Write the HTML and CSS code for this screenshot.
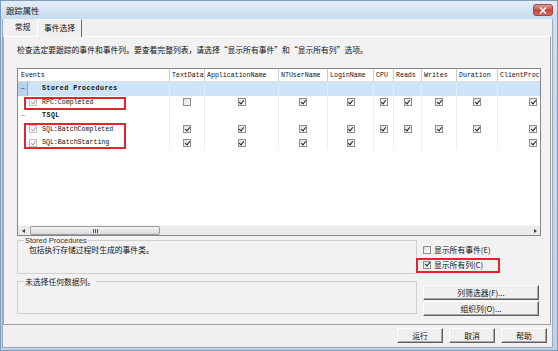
FILE: index.html
```html
<!DOCTYPE html>
<html lang="zh-CN">
<head>
<meta charset="utf-8">
<title>跟踪属性</title>
<link rel="stylesheet" href="styles.css">
</head>
<body>
<div class="win">
  <div class="titlebar">
    <span class="title">跟踪属性</span>
    <span class="close"><svg width="8" height="7" viewBox="0 0 8 7"><path d="M1 0.5 L7 6.5 M7 0.5 L1 6.5" stroke="#fff" stroke-width="1.6"/></svg></span>
  </div>
  <div class="client">
    <div class="tabs">
      <span class="tab">常规</span>
      <span class="tab active">事件选择</span>
    </div>
    <div class="panel">
      <p class="intro">检查选定要跟踪的事件和事件列。要查看完整列表，请选择“显示所有事件”和“显示所有列”选项。</p>
      <div class="grid">
        <div class="viewport">
          <div class="row head">
            <div class="c c0">Events</div>
            <div class="c">TextData</div>
            <div class="c">ApplicationName</div>
            <div class="c">NTUserName</div>
            <div class="c">LoginName</div>
            <div class="c">CPU</div>
            <div class="c">Reads</div>
            <div class="c">Writes</div>
            <div class="c">Duration</div>
            <div class="c">ClientProcessID</div>
          </div>
          <div class="row cat sel">
            <div class="c c0"><span class="exp box">−</span><b>Stored Procedures</b></div>
            <div class="c"></div><div class="c"></div><div class="c"></div><div class="c"></div>
            <div class="c"></div><div class="c"></div><div class="c"></div><div class="c"></div><div class="c"></div>
          </div>
          <div class="row ev">
            <div class="c c0"><span class="cb dim on"></span><span>RPC:Completed</span></div>
            <div class="c k"><span class="cb"></span></div>
            <div class="c k"><span class="cb on"></span></div>
            <div class="c k"><span class="cb on"></span></div>
            <div class="c k"><span class="cb on"></span></div>
            <div class="c k"><span class="cb on"></span></div>
            <div class="c k"><span class="cb on"></span></div>
            <div class="c k"><span class="cb on"></span></div>
            <div class="c k"><span class="cb on"></span></div>
            <div class="c k"><span class="cb on"></span></div>
          </div>
          <div class="row cat">
            <div class="c c0"><span class="exp">−</span><b>TSQL</b></div>
            <div class="c"></div><div class="c"></div><div class="c"></div><div class="c"></div>
            <div class="c"></div><div class="c"></div><div class="c"></div><div class="c"></div><div class="c"></div>
          </div>
          <div class="row ev">
            <div class="c c0"><span class="cb dim on"></span><span>SQL:BatchCompleted</span></div>
            <div class="c k"><span class="cb on"></span></div>
            <div class="c k"><span class="cb on"></span></div>
            <div class="c k"><span class="cb on"></span></div>
            <div class="c k"><span class="cb on"></span></div>
            <div class="c k"><span class="cb on"></span></div>
            <div class="c k"><span class="cb on"></span></div>
            <div class="c k"><span class="cb on"></span></div>
            <div class="c k"><span class="cb on"></span></div>
            <div class="c k"><span class="cb on"></span></div>
          </div>
          <div class="row ev">
            <div class="c c0"><span class="cb dim on"></span><span>SQL:BatchStarting</span></div>
            <div class="c k"><span class="cb on"></span></div>
            <div class="c k"><span class="cb on"></span></div>
            <div class="c k"><span class="cb on"></span></div>
            <div class="c k"><span class="cb on"></span></div>
            <div class="c k"></div>
            <div class="c k"></div>
            <div class="c k"></div>
            <div class="c k"></div>
            <div class="c k"><span class="cb on"></span></div>
          </div>
        </div>
        <div class="hscroll">
          <span class="arrow left"></span>
          <span class="thumb"><span class="grip"></span></span>
          <span class="arrow right"></span>
        </div>
        <span class="mark m1"></span>
        <span class="mark m2"></span>
      </div>
      <div class="lower">
        <div class="groups">
          <fieldset class="gb gb1">
            <legend class="lat">Stored Procedures</legend>
            <p class="desc">包括执行存储过程时生成的事件类。</p>
          </fieldset>
          <fieldset class="gb gb2">
            <legend>未选择任何数据列。</legend>
          </fieldset>
        </div>
        <div class="side">
          <div class="opt"><span class="cb"></span><span>显示所有事件(E)</span></div>
          <div class="opt hl"><span class="cb on"></span><span>显示所有列(C)</span></div>
          <button class="btn wide first">列筛选器(F)...</button>
          <button class="btn wide">组织列(O)...</button>
        </div>
      </div>
    </div>
    <div class="footer">
      <button class="btn">运行</button>
      <button class="btn">取消</button>
      <button class="btn">帮助</button>
    </div>
  </div>
</div>
</body>
</html>
```

FILE: styles.css
```css
* { box-sizing: border-box; }

html, body {
  margin: 0;
  width: 558px;
  height: 351px;
  overflow: hidden;
}

body {
  font-family: "Noto Sans CJK SC", "Liberation Sans", sans-serif;
  font-size: 7.8px;
  color: #111;
  background: #c6d8ec;
}

.win {
  width: 558px;
  height: 351px;
  display: flex;
  flex-direction: column;
  background: linear-gradient(#cfdff0, #bcd2ea);
  border: 1px solid #7f9db9;
}

.titlebar {
  height: 18px;
  display: flex;
  align-items: center;
  padding-left: 5px;
  background: linear-gradient(#e4eef8, #c8daee);
}

.title {
  font-size: 8.4px;
  line-height: 10px;
  color: #1a1a1a;
}

.close {
  margin-left: auto;
  margin-right: 4px;
  width: 20px;
  height: 12px;
  border-radius: 3px;
  border: 1px solid #9b4a4a;
  background: linear-gradient(#e29a92, #c7463d 55%, #d26a5e);
  display: flex;
  align-items: center;
  justify-content: center;
}

.client {
  flex: 1;
  margin: 0 4px 2px 1px;
  background: #f0f0f0;
  display: flex;
  flex-direction: column;
  border: 1px solid #9aaabb;
  border-top: none;
}

.tabs {
  height: 17px;
  display: flex;
  align-items: flex-end;
  padding-left: 5px;
}

.tab {
  height: 17px;
  line-height: 16px;
  padding: 0 5px;
  width: 29px;
  text-align: center;
}

.tab.active {
  width: 45px;
  border-left: 1px solid #fff;
  border-top: 1px solid #fff;
  border-right: 1px solid #6a6a6a;
  background: #f0f0f0;
  position: relative;
  height: 18px;
  margin-bottom: -1px;
}

.panel {
  margin: 0 1px 0 0;
  width: 548px;
  height: 289px;
  border: 1px solid #a0a0a0;
  border-top-color: #fff;
  border-left-color: #a8a8a8;
  padding: 7px 9px 0 13px;
  background: #f2f2f2;
}

.intro {
  margin: 0;
  line-height: 11px;
  white-space: nowrap;
}

/* ---- grid ---- */
.grid {
  position: relative;
  margin-top: 13px;
  height: 168px;
  border: 1px solid #828790;
  background: #fff;
  display: flex;
  flex-direction: column;
  overflow: hidden;
}

.viewport {
  flex: 1;
  overflow: hidden;
}

.row {
  display: grid;
  grid-template-columns: 152px 35px 74px 49px 46px 20px 28px 35px 41px 70px;
  width: 550px;
  height: 13.5px;
  font-family: "Liberation Mono", "DejaVu Sans Mono", monospace;
  font-size: 6.6px;
}

.c {
  border-right: 1px solid #ededed;
  display: flex;
  align-items: center;
  white-space: nowrap;
  overflow: hidden;
}

.head {
  height: 13px;
  background: #fff;
}

.head .c {
  border-right: 1px solid #cfcfcf;
  border-bottom: 1px solid #dcdcdc;
  padding-left: 2px;
}

.head .c0 { padding-left: 3px; }

.sel { background: #cde3f7; }
.sel .c { border-right-color: #e2eef9; }

.cat b {
  font-weight: bold;
  letter-spacing: 0.5px;
}

.c0 { padding-left: 0; }

.exp {
  width: 10px;
  height: 100%;
  display: flex;
  align-items: center;
  justify-content: center;
  font-size: 7px;
  color: #666;
  margin-right: 14px;
  font-family: "Liberation Sans", sans-serif;
}

.exp.box {
  background: #b7d2ee;
  border-right: 1px solid #8ea6bf;
  color: #222;
}

.ev .c0 { padding-left: 11px; }
.ev .c0 .cb { margin-right: 5px; }

.k { justify-content: center; }
.k:last-child { justify-content: flex-start; padding-left: 31px; }

/* checkbox */
.cb {
  position: relative;
  display: inline-block;
  flex: none;
  width: 8px;
  height: 8px;
  border: 1px solid #8e8f8f;
  background: linear-gradient(135deg, #dedede, #fff);
}

.cb.on::after {
  content: "";
  position: absolute;
  left: 1.7px;
  top: -0.2px;
  width: 2px;
  height: 4.2px;
  border: solid #1e1e1e;
  border-width: 0 1.4px 1.4px 0;
  transform: rotate(40deg);
}

.cb.dim {
  border-color: #c2c2c2;
  background: #f6f6f6;
}

.cb.dim.on::after { border-color: #a9a9a9; }

/* horizontal scrollbar */
.hscroll {
  height: 10px;
  flex: none;
  display: flex;
  align-items: center;
  background: #ebebeb;
  border-top: 1px solid #f4f4f4;
}

.arrow {
  width: 10px;
  height: 10px;
  display: flex;
  align-items: center;
  justify-content: center;
  position: relative;
}

.arrow::after {
  content: "";
  border-top: 2.5px solid transparent;
  border-bottom: 2.5px solid transparent;
}

.arrow.left::after { border-right: 3px solid #3c3c3c; }
.arrow.right { margin-left: auto; }
.arrow.right::after { border-left: 3px solid #3c3c3c; }

.thumb {
  margin-left: 2px;
  width: 130px;
  height: 9px;
  border: 1px solid #9b9b9b;
  border-radius: 2px;
  background: linear-gradient(#f5f5f5, #dadada);
  display: flex;
  align-items: center;
  justify-content: center;
}

.grip {
  width: 5px;
  height: 4px;
  background: repeating-linear-gradient(90deg, #555 0 1px, transparent 1px 2px);
}

/* red annotation frames */
.mark {
  position: absolute;
  border: 2px solid #e0252c;
  pointer-events: none;
}

.m1 { left: 6px; top: 28px; width: 102px; height: 13px; }
.m2 { left: 6px; top: 54px; width: 102px; height: 26px; }

/* lower area */
.lower {
  display: flex;
}

.groups {
  width: 400px;
  display: flex;
  flex-direction: column;
}

.gb {
  margin: 0;
  padding: 0 0 0 6px;
  min-width: 0;
  border: 1px solid #d0d0d0;
  height: 38px;
}

.gb legend {
  padding: 0 1px;
  line-height: 9px;
  color: #222;
}

.gb legend.lat {
  font-family: "Liberation Sans", sans-serif;
  font-size: 7.4px;
  color: #333;
}

.gb2 { margin-top: 3px; height: 37px; }

.desc {
  margin: 0 0 0 5px;
  line-height: 10px;
}

.side {
  width: 116px;
  margin-left: 6px;
  display: flex;
  flex-direction: column;
  align-items: flex-start;
}

.opt {
  display: flex;
  align-items: center;
  gap: 3px;
  line-height: 10px;
  height: 10px;
  margin-top: 9px;
  white-space: nowrap;
}

.opt.hl {
  margin-top: 3px;
  margin-left: -7px;
  width: 84px;
  height: 15px;
  border: 2px solid #e0252c;
  padding: 0 0 2px 5px;
}

.btn {
  font-family: "Noto Sans CJK SC", sans-serif;
  font-size: 7.8px;
  color: #111;
  height: 15px;
  width: 46px;
  padding: 0;
  line-height: 12px;
  background: #f0f0f0;
  border: 1px solid;
  border-color: #fff #5f5f5f #5f5f5f #fff;
  box-shadow: inset -1px -1px #a8a8a8;
}

.btn.wide { width: 116px; }
.btn.first { margin-top: 12px; margin-bottom: 1px; }

.footer {
  flex: 1;
  display: flex;
  justify-content: flex-end;
  align-items: flex-start;
  gap: 6px;
  padding: 3px 5px 0 0;
}
```
